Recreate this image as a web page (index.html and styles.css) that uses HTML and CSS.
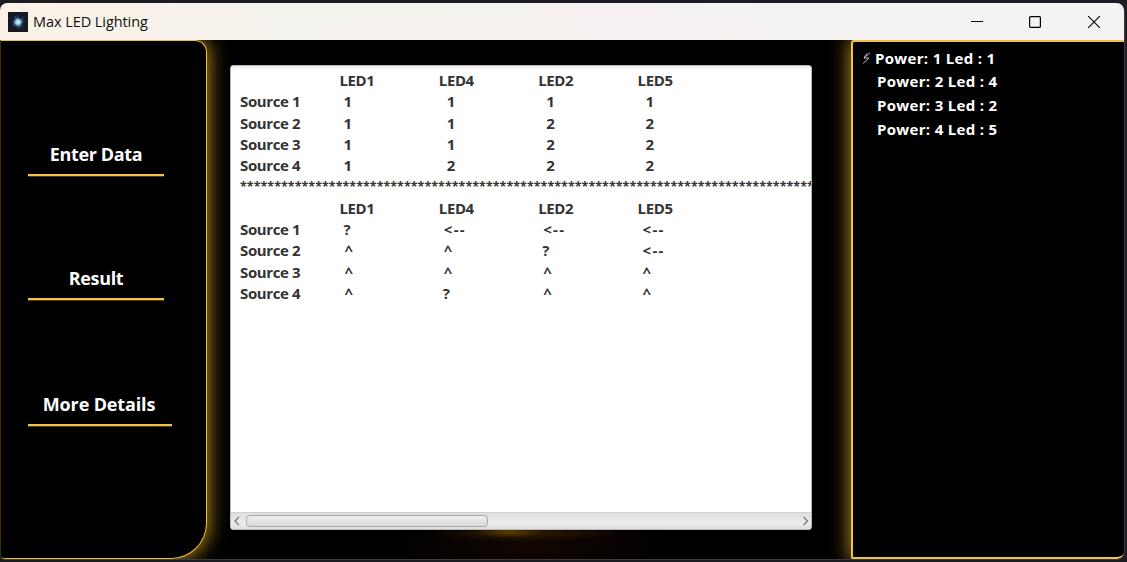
FILE: index.html
```html
<!DOCTYPE html>
<html lang="en">
<head>
<meta charset="utf-8">
<title>Max LED Lighting</title>
<link rel="stylesheet" href="styles.css">
</head>
<body>
<div class="window">
  <header class="titlebar">
    <svg class="logo" width="20" height="20" viewBox="0 0 20 20">
      <defs><radialGradient id="spark"><stop offset="0" stop-color="#f2fbff"/><stop offset=".5" stop-color="#7fc0e6"/><stop offset="1" stop-color="#2b6f9c" stop-opacity="0"/></radialGradient></defs>
      <rect width="20" height="20" fill="#161a24"/>
      <path d="M10 3v14M4 10h13M5.500 5l9.500 10M15 5l-9.500 10M7.500 4l5 12M4.500 12.500l11-5" stroke="#3d7095" stroke-width=".7"/>
      <circle cx="10" cy="10.200" r="5.200" fill="url(#spark)"/>
    </svg>
    <h1 class="title">Max LED Lighting</h1>
    <div class="controls">
      <svg width="16" height="16" viewBox="0 0 16 16"><path d="M2 7.500h12" stroke="#000" fill="none"/></svg>
      <svg width="16" height="16" viewBox="0 0 16 16"><rect x="1.600" y="2.600" width="10.800" height="10.800" rx="1" stroke="#000" stroke-width="1.200" fill="none"/></svg>
      <svg width="16" height="16" viewBox="0 0 16 16"><path d="M2.200 2.200l11.600 11.600M13.800 2.200L2.200 13.800" stroke="#000" stroke-width="1.100" fill="none"/></svg>
    </div>
  </header>
  <main class="content">
    <nav class="menu">
      <a class="item enter">Enter Data</a>
      <a class="item result">Result</a>
      <a class="item details">More Details</a>
    </nav>
    <section class="output">
      <div class="rows">
        <div class="row"><span></span><span>LED1</span><span>LED4</span><span>LED2</span><span>LED5</span></div>
        <div class="row"><b>Source 1</b><span class="n1">1</span><span class="n2">1</span><span class="n2">1</span><span class="n2">1</span></div>
        <div class="row"><b>Source 2</b><span class="n1">1</span><span class="n2">1</span><span class="n2">2</span><span class="n2">2</span></div>
        <div class="row"><b>Source 3</b><span class="n1">1</span><span class="n2">1</span><span class="n2">2</span><span class="n2">2</span></div>
        <div class="row"><b>Source 4</b><span class="n1">1</span><span class="n2">2</span><span class="n2">2</span><span class="n2">2</span></div>
        <div class="stars">************************************************************************************</div>
        <div class="row"><span></span><span>LED1</span><span>LED4</span><span>LED2</span><span>LED5</span></div>
        <div class="row"><b>Source 1</b><span class="q">?</span><span class="arrow">&lt;--</span><span class="arrow">&lt;--</span><span class="arrow">&lt;--</span></div>
        <div class="row"><b>Source 2</b><span class="up">^</span><span class="up">^</span><span class="q">?</span><span class="arrow">&lt;--</span></div>
        <div class="row"><b>Source 3</b><span class="up">^</span><span class="up">^</span><span class="up">^</span><span class="up">^</span></div>
        <div class="row"><b>Source 4</b><span class="up">^</span><span class="q">?</span><span class="up">^</span><span class="up">^</span></div>
      </div>
      <div class="scrollbar">
        <svg width="14" height="16" viewBox="0 0 14 16"><path d="M8 4L4 8l4 4" stroke="#777" stroke-width="1.300" fill="none"/></svg>
        <div class="track"><div class="thumb"></div></div>
        <svg width="14" height="16" viewBox="0 0 14 16"><path d="M6.500 4l4 4-4 4" stroke="#777" stroke-width="1.300" fill="none"/></svg>
      </div>
    </section>
    <aside class="power">
      <div class="line first"><svg width="9" height="12" viewBox="0 0 9 12"><path d="M8 .8L2 6h5L1 11.500M5 1.500L2 6" stroke="#d0d0d0" stroke-width=".9" fill="none"/></svg><span>Power: 1 Led : 1</span></div>
      <div class="line">Power: 2 Led : 4</div>
      <div class="line">Power: 3 Led : 2</div>
      <div class="line">Power: 4 Led : 5</div>
    </aside>
  </main>
</div>
</body>
</html>
```

FILE: styles.css
```css
* { box-sizing: border-box; }
body {
  margin: 0;
  width: 1127px;
  height: 562px;
  padding: 3px 2px 2px 0;
  overflow: hidden;
  background: #1d1c22;
  font-family: "Open Sans", "Noto Sans", sans-serif;
}
.window {
  height: 557px;
  overflow: hidden;
  border-radius: 7px 8px 8px 5px;
  border-right: 1px solid #3c3c40;
  border-bottom: 1px solid #3c3c40;
  background: #000;
}
.titlebar {
  height: 37px;
  display: flex;
  align-items: center;
  padding-left: 8px;
  background: linear-gradient(90deg, #fbf1e6, #f4f2ec 25%, #f6f1f0 55%, #f3f3f1 80%);
}
.logo { display: block; }
.title {
  margin: 0 0 0 5px;
  font-size: 14.5px;
  font-weight: 400;
  line-height: 20px;
  letter-spacing: -0.07px;
  color: #111;
}
.controls {
  margin-left: auto;
  display: flex;
  gap: 42.5px;
  padding-right: 22px;
}
.controls svg { display: block; }
.content {
  height: 519px;
  display: flex;
  align-items: stretch;
  overflow: hidden;
  background: radial-gradient(ellipse 34px 6px at 508px 492px, rgba(100, 72, 0, .8), transparent),
    radial-gradient(ellipse 95px 9px at 525px 493px, #2e1c02, transparent),
    radial-gradient(ellipse 150px 50px at 530px 507px, #120602, transparent), #000;
}
.menu {
  width: 207px;
  display: flex;
  flex-direction: column;
  align-items: flex-start;
  padding: 97px 0 0 27px;
  background: #000;
  border: 1px solid #f2be38;
  border-left-color: #3f300b;
  border-radius: 0 12px 36px 4px;
  box-shadow: 0 0 19px 1px #c59522;
}
.item {
  width: 136px;
  height: 38px;
  border-bottom: 2px solid #f5c445;
  box-shadow: 0 1px 0 #4a3a14;
  text-align: center;
  color: #fff;
  font-size: 18px;
  font-weight: 700;
  line-height: 33px;
  letter-spacing: -0.35px;
}
.result { margin-top: 86px; }
.details { width: 144px; margin-top: 88px; letter-spacing: -0.15px; padding-right: 2px; }
.output {
  width: 582px;
  height: 465px;
  margin: 25px 0 0 23px;
  display: flex;
  flex-direction: column;
  overflow: hidden;
  border: 1px solid #b8b8b8;
  border-radius: 3px;
  background: linear-gradient(#ededed, #fff 5px);
}
.rows {
  flex: 1;
  padding: 4px 0 0 9px;
  overflow: hidden;
  color: #333;
  font-size: 15px;
  font-weight: 700;
  line-height: 21.300px;
  letter-spacing: -0.38px;
}
.row {
  display: grid;
  grid-template-columns: repeat(5, 99.400px);
  height: 21.300px;
}
.row b { font-weight: 700; }
.n1 { padding-left: 4px; }
.n2 { padding-left: 8px; }
.q { padding-left: 4px; }
.up { padding-left: 5px; }
.arrow { padding-left: 5px; letter-spacing: 1.3px; }
.stars {
  height: 21.300px;
  font-size: 12.500px;
  letter-spacing: 0.02px;
  white-space: nowrap;
}
.scrollbar {
  height: 17px;
  display: flex;
  align-items: center;
  border-top: 1px solid #d0d0d0;
  background: linear-gradient(#dedede, #ececec 60%, #dedede);
}
.scrollbar svg { display: block; }
.track { flex: 1; }
.thumb {
  width: 242px;
  height: 12px;
  margin-left: 1px;
  border: 1px solid #aaa;
  border-radius: 4px;
  background: linear-gradient(#eee, #dadada);
}
.power {
  flex: 1;
  margin-left: 39px;
  padding: 4px 0 0 24px;
  border: 2px solid #f0c24b;
  border-right: 0;
  border-radius: 3px 0 7px 2px;
  background: #000;
  box-shadow: 0 0 19px 1px #b88b22;
  color: #fff;
  font-size: 15px;
  font-weight: 700;
  line-height: 24px;
  letter-spacing: 0.32px;
}
.first {
  display: flex;
  align-items: center;
  height: 23px;
  margin-left: -15px;
  gap: 4px;
}
```
